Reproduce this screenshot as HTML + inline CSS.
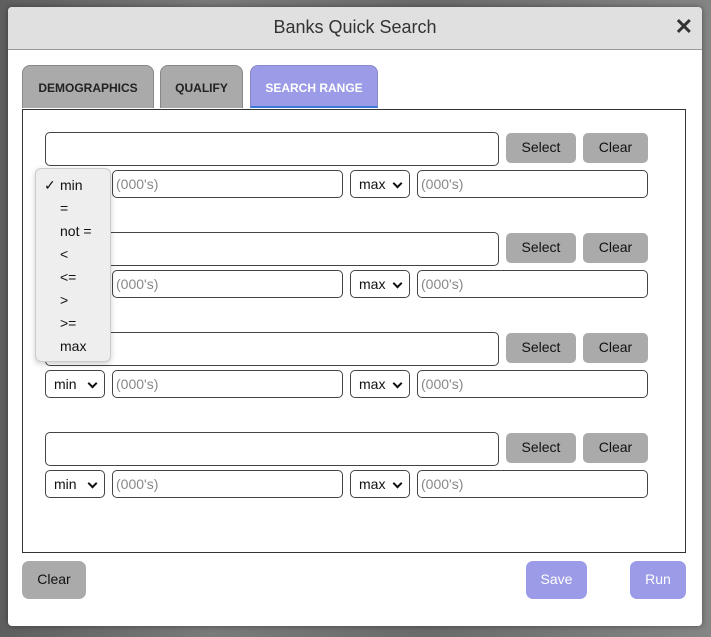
<!DOCTYPE html>
<html><head><style>
*{box-sizing:border-box;margin:0;padding:0}
body{width:711px;height:637px;overflow:hidden;position:relative;font-family:"Liberation Sans",Arial,sans-serif;background:linear-gradient(90deg,#5e5e5e,#7a7a7a 30%,#6a6a6a 60%,#858585);}
.modal{position:absolute;left:8px;top:7px;width:694px;height:619px;background:#fff;border-radius:4px;box-shadow:0 0 6px rgba(0,0,0,.4);overflow:hidden}
.hdr{height:43px;background:#e0e0e0;border-bottom:1px solid #999;text-align:center;font-size:18px;line-height:40px;color:#333}
.x{position:absolute;right:9px;top:9px;font-size:22px;font-weight:bold;color:#333;line-height:22px}
.abs{position:absolute}
.tab{position:absolute;top:58px;height:43px;border:1px solid #888;border-bottom:none;border-radius:8px 8px 0 0;background:#aaa;font-size:12px;font-weight:bold;color:#222;text-align:center;line-height:44px}
.box{position:absolute;left:14px;top:102px;width:664px;height:444px;border:1px solid #333}
.in{position:absolute;border:1px solid #444;border-radius:5px;background:#fff;font-size:14px;color:#888;padding-left:3px;line-height:26px}
.btn{position:absolute;background:#aaa;border-radius:5px;font-size:14px;color:#111;text-align:center}
.sel{position:absolute;border:1px solid #444;border-radius:5px;background:#fff;font-size:14px;color:#111;line-height:26px;padding-left:8px}
.sel:after{content:"";position:absolute;right:8px;top:9px;width:5px;height:5px;border-right:2px solid #111;border-bottom:2px solid #111;transform:rotate(45deg)}
.dd{position:absolute;left:35px;top:168px;width:76px;height:194px;background:#eee;border:1px solid #ccc;border-radius:6px;box-shadow:0 2px 6px rgba(0,0,0,.2);font-size:14px;color:#111}
.dd div{position:absolute;left:24px}
</style></head><body>
<div class="modal">
<div class="hdr">Banks Quick Search</div>
<div class="x">✕</div>
<div class="tab" style="left:14px;width:132px">DEMOGRAPHICS</div>
<div class="tab" style="left:152px;width:83px">QUALIFY</div>
<div class="tab" style="left:242px;width:128px;background:#9b9be8;color:#fff;border-color:#8888cc;border-bottom:2px solid #3a7bd5">SEARCH RANGE</div>
<div class="box"></div>
</div>
<!-- rows -->
<div id="rows"></div>
<script></script>
<div class="in" style="left:45px;top:132px;width:454px;height:34px"></div>
<div class="btn" style="left:506px;top:133px;width:70px;height:30px;line-height:29px">Select</div>
<div class="btn" style="left:583px;top:133px;width:65px;height:30px;line-height:29px">Clear</div>
<div class="in" style="left:112px;top:170px;width:231px;height:28px">(000's)</div>
<div class="sel" style="left:350px;top:170px;width:60px;height:28px">max</div>
<div class="in" style="left:417px;top:170px;width:231px;height:28px">(000's)</div>

<div class="in" style="left:45px;top:232px;width:454px;height:34px"></div>
<div class="btn" style="left:506px;top:233px;width:70px;height:30px;line-height:29px">Select</div>
<div class="btn" style="left:583px;top:233px;width:65px;height:30px;line-height:29px">Clear</div>
<div class="in" style="left:112px;top:270px;width:231px;height:28px">(000's)</div>
<div class="sel" style="left:350px;top:270px;width:60px;height:28px">max</div>
<div class="in" style="left:417px;top:270px;width:231px;height:28px">(000's)</div>

<div class="in" style="left:45px;top:332px;width:454px;height:34px"></div>
<div class="btn" style="left:506px;top:333px;width:70px;height:30px;line-height:29px">Select</div>
<div class="btn" style="left:583px;top:333px;width:65px;height:30px;line-height:29px">Clear</div>
<div class="sel" style="left:45px;top:370px;width:60px;height:28px">min</div>
<div class="in" style="left:112px;top:370px;width:231px;height:28px">(000's)</div>
<div class="sel" style="left:350px;top:370px;width:60px;height:28px">max</div>
<div class="in" style="left:417px;top:370px;width:231px;height:28px">(000's)</div>

<div class="in" style="left:45px;top:432px;width:454px;height:34px"></div>
<div class="btn" style="left:506px;top:433px;width:70px;height:30px;line-height:29px">Select</div>
<div class="btn" style="left:583px;top:433px;width:65px;height:30px;line-height:29px">Clear</div>
<div class="sel" style="left:45px;top:470px;width:60px;height:28px">min</div>
<div class="in" style="left:112px;top:470px;width:231px;height:28px">(000's)</div>
<div class="sel" style="left:350px;top:470px;width:60px;height:28px">max</div>
<div class="in" style="left:417px;top:470px;width:231px;height:28px">(000's)</div>

<div class="dd">
<div style="left:8px;top:8px">✓</div>
<div style="top:8px">min</div>
<div style="top:31px">=</div>
<div style="top:54px">not =</div>
<div style="top:77px">&lt;</div>
<div style="top:100px">&lt;=</div>
<div style="top:123px">&gt;</div>
<div style="top:146px">&gt;=</div>
<div style="top:169px">max</div>
</div>

<div class="btn" style="left:22px;top:561px;width:64px;height:38px;line-height:37px;border-radius:7px">Clear</div>
<div class="btn" style="left:526px;top:561px;width:61px;height:38px;line-height:37px;border-radius:7px;background:#9b9be8;color:#fff">Save</div>
<div class="btn" style="left:630px;top:561px;width:56px;height:38px;line-height:37px;border-radius:7px;background:#9b9be8;color:#fff">Run</div>
</body></html>
